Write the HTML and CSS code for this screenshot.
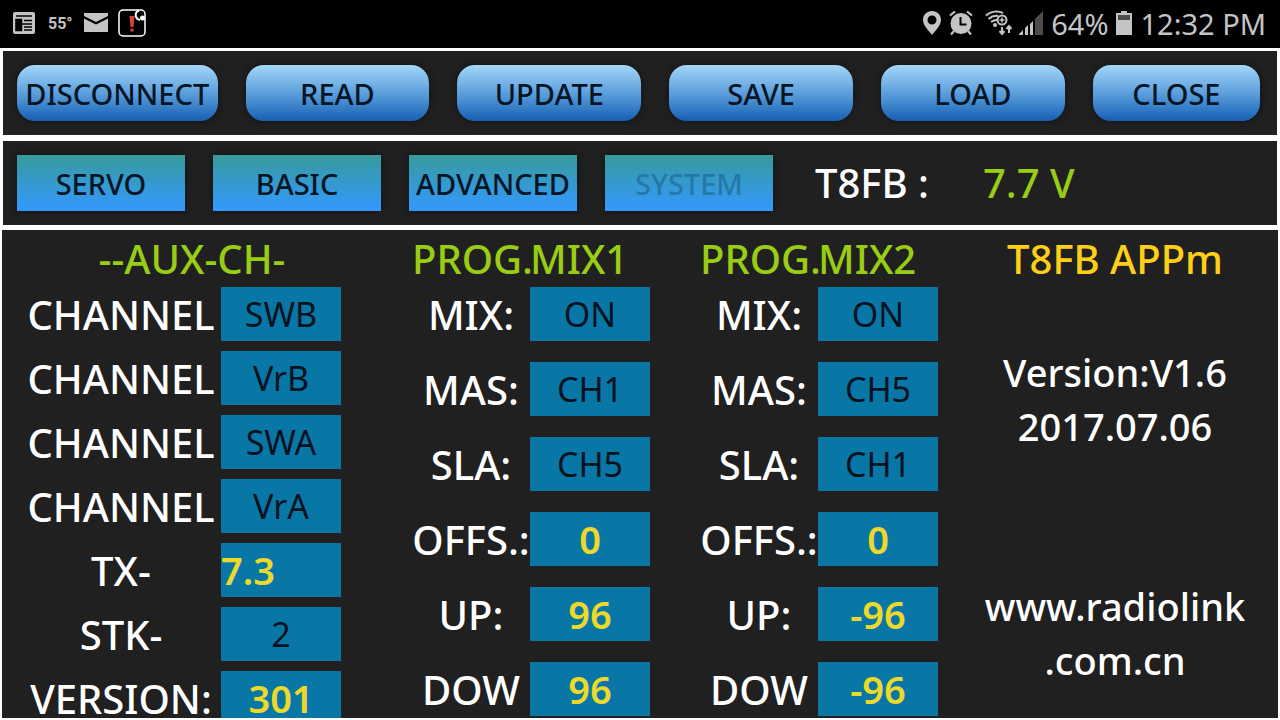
FILE: index.html
```html
<!DOCTYPE html>
<html lang="en">

<head>
    <meta charset="UTF-8">
    <meta name="viewport" content="width=device-width, initial-scale=1">
    <title>T8FB APPm</title>
    <link rel="stylesheet" href="styles.css">
</head>

<body>
    <header class="statusbar">
        <div class="status-left">
            <svg width="24" height="24" viewBox="0 0 24 24">
                <rect x="1" y="1" width="22" height="22" rx="2" fill="#c4c4c4"/>
                <path d="M4 5h16M4 8.500h5.500v11H4zM12 9.500h8M10 13h10M12 16h8M12 19h8" stroke="#000" stroke-width="1.600" fill="none"/>
                <path d="M4 8h5v11H4z" fill="#000"/>
            </svg>
            <span class="temp">55°</span>
            <svg width="24" height="20" viewBox="0 0 24 20">
                <path d="M0 0h24v3l-12 6L0 3z" fill="#c4c4c4"/>
                <path d="M0 5.500l12 6 12-6V19H0z" fill="#c4c4c4"/>
            </svg>
            <svg class="alert" width="28" height="28" viewBox="0 0 28 28">
                <rect x="1" y="1" width="26" height="26" rx="4" fill="#000" stroke="#fff" stroke-width="1.500"/>
                <path d="M11.500 7h5l-1 11h-3zM12.500 19.500h3v3h-3z" fill="#d8433c"/>
                <path d="M21 1.500c-5 2-4 8.500 1 9.500" stroke="#fff" stroke-width="2" fill="none"/>
                <circle cx="24.500" cy="9" r="2.500" fill="#fff"/>
            </svg>
        </div>
        <div class="status-right">
            <svg width="18" height="26" viewBox="0 0 18 26">
                <path fill-rule="evenodd" d="M9 1C4 1 0 4.800 0 9.800 0 15.500 5 20 9 25c4-5 9-9.500 9-15.200C18 4.800 14 1 9 1zm0 4.500a4.500 4.500 0 1 1 0 9 4.500 4.500 0 0 1 0-9z" fill="#c4c4c4"/>
            </svg>
            <svg width="24" height="26" viewBox="0 0 24 26">
                <circle cx="12" cy="13.500" r="10.500" fill="#c4c4c4"/>
                <path d="M1 5.500l5-4M23 5.500l-5-4M5 21l-3 3.500M19 21l3 3.500" stroke="#c4c4c4" stroke-width="2.200"/>
                <path d="M11.500 7v7.500h6" stroke="#000" stroke-width="2" fill="none"/>
            </svg>
            <svg class="wifi" width="28" height="26" viewBox="0 0 28 26">
                <g stroke="#c4c4c4" stroke-width="2" fill="none">
                    <path d="M1 5.500C6 1 13 .500 18 3M3.500 9C7 6 10 5.500 13 6M6 12c2-1.500 3.500-2 6-2"/>
                    <circle cx="17" cy="10" r="4.500"/>
                    <path d="M17 7.500v5M14.500 10h5" stroke-width="1.500"/>
                    <path d="M17 17v7M14.500 21l2.500 3 2.500-3M24 23v-7M21.500 19l2.500-3 2.500 3"/>
                </g>
                <circle cx="10" cy="15" r="2" fill="#c4c4c4"/>
            </svg>
            <svg width="24" height="24" viewBox="0 0 24 24">
                <path d="M0 24v-1l4-4v5zM6 24v-7l3-3v10zM11 24V13l3-3v14z" fill="#c4c4c4"/>
                <path d="M16 24V8l8-8v24z" fill="#4c4c4c"/>
            </svg>
            <span>64%</span>
            <svg width="16" height="24" viewBox="0 0 16 24">
                <path d="M5 0h6v2h5v22H0V2h5z" fill="#c4c4c4"/>
                <path d="M2 4h12v5H2z" fill="#4c4c4c"/>
            </svg>
            <span>12:32 PM</span>
        </div>
    </header>

    <div class="panel toolbar">
        <button type="button">DISCONNECT</button>
        <button type="button">READ</button>
        <button type="button">UPDATE</button>
        <button type="button">SAVE</button>
        <button type="button">LOAD</button>
        <button type="button">CLOSE</button>
    </div>

    <nav class="panel tabs">
        <button type="button">SERVO</button>
        <button type="button">BASIC</button>
        <button type="button">ADVANCED</button>
        <button type="button" disabled>SYSTEM</button>
        <span class="device">T8FB :</span>
        <span class="voltage">7.7 V</span>
    </nav>

    <main class="content">
        <section class="aux">
            <h2>--AUX-CH-</h2>
            <div class="fields">
                <label for="ch1">CHANNEL</label>
                <button type="button" id="ch1">SWB</button>
                <label for="ch2">CHANNEL</label>
                <button type="button" id="ch2">VrB</button>
                <label for="ch3">CHANNEL</label>
                <button type="button" id="ch3">SWA</button>
                <label for="ch4">CHANNEL</label>
                <button type="button" id="ch4">VrA</button>
                <label for="tx">TX-</label>
                <input class="left" type="text" id="tx" value="7.3">
                <label for="stk">STK-</label>
                <button type="button" id="stk">2</button>
                <label for="version">VERSION:</label>
                <input type="text" id="version" value="301">
            </div>
        </section>

        <section class="mix mix1">
            <h2><span>PROG.</span><span>MIX1</span></h2>
            <div class="fields">
                <label for="mix1">MIX:</label>
                <button type="button" id="mix1">ON</button>
                <label for="mas1">MAS:</label>
                <button type="button" id="mas1">CH1</button>
                <label for="sla1">SLA:</label>
                <button type="button" id="sla1">CH5</button>
                <label for="offs1">OFFS.:</label>
                <input type="text" id="offs1" value="0">
                <label for="up1">UP:</label>
                <input type="text" id="up1" value="96">
                <label for="down1">DOW</label>
                <input type="text" id="down1" value="96">
            </div>
        </section>

        <section class="mix mix2">
            <h2><span>PROG.</span><span>MIX2</span></h2>
            <div class="fields">
                <label for="mix2">MIX:</label>
                <button type="button" id="mix2">ON</button>
                <label for="mas2">MAS:</label>
                <button type="button" id="mas2">CH5</button>
                <label for="sla2">SLA:</label>
                <button type="button" id="sla2">CH1</button>
                <label for="offs2">OFFS.:</label>
                <input type="text" id="offs2" value="0">
                <label for="up2">UP:</label>
                <input type="text" id="up2" value="-96">
                <label for="down2">DOW</label>
                <input type="text" id="down2" value="-96">
            </div>
        </section>

        <section class="info">
            <h2>T8FB APPm</h2>
            <p class="release">Version:V1.6<br>2017.07.06</p>
            <p class="site">www.radiolink<br>.com.cn</p>
        </section>
    </main>
</body>

</html>
```
FILE: styles.css
```css
* {
    box-sizing: border-box;
}

body {
    margin: 0;
    height: 100vh;
    overflow: hidden;
    display: flex;
    flex-direction: column;
    background-color: #fff;
    color: #fff;
    font-family: "Noto Sans", "Open Sans", sans-serif;
    font-weight: 500;
}

button,
input {
    font-family: inherit;
    border: none;
    padding: 0;
}

/* phone status bar */
.statusbar {
    display: flex;
    justify-content: space-between;
    align-items: center;
    flex: none;
    height: 48px;
    padding: 0 14px 2px 12px;
    background-color: #000;
    color: #c4c4c4;
    font-size: 29px;
    font-weight: 400;
}

.status-left,
.status-right {
    display: flex;
    align-items: center;
}

.status-left {
    gap: 12px;
}

.status-right {
    gap: 8px;
}

.temp {
    width: 24px;
    font-family: Roboto, sans-serif;
    font-size: 16px;
    font-weight: 700;
    text-align: center;
}

.alert {
    margin-left: -2px;
}

.wifi {
    margin-left: 4px;
    margin-right: -2px;
}

/* button rows */
.panel {
    flex: none;
    margin: 3px 3px 0;
    padding: 14px;
    background-color: #202020;
}

.panel button {
    height: 56px;
    font-size: 29px;
    font-weight: 500;
    color: #041525;
}

.toolbar {
    display: grid;
    grid-template-columns: 12fr 11fr 11fr 11fr 11fr 10fr;
    gap: 28px;
    padding-right: 17px;
}

.toolbar button {
    border-radius: 18px;
    background: linear-gradient(#a4d6f8, #5c9fdc 50%, #1560b4);
    box-shadow: 0 0 6px #111;
}

.tabs {
    display: flex;
    align-items: center;
    gap: 28px;
    margin-top: 6px;
}

.tabs button {
    width: 168px;
    background: linear-gradient(#379a9c, #3399ff);
    box-shadow: 0 0 6px #111;
}

.tabs button:disabled {
    color: #2479a8;
}

.device,
.voltage {
    font-size: 40px;
    line-height: 56px;
    padding-left: 14px;
}

.voltage {
    padding-left: 26px;
    color: #99cc14;
}

/* settings */
.content {
    flex: 1;
    min-height: 0;
    overflow: hidden;
    display: grid;
    grid-template-columns: minmax(0, 339fr) minmax(0, 309fr) minmax(0, 288fr) minmax(0, 340fr);
    margin: 5px 2px 2px;
    background-color: #202020;
}

h2 {
    margin: 0;
    height: 57px;
    font-size: 40px;
    font-weight: 500;
    line-height: 57px;
    text-align: center;
    color: #99cc14;
}

.fields {
    display: grid;
    grid-template-columns: minmax(0, 1fr) 120px;
    row-gap: 10px;
}

.fields label {
    font-size: 40px;
    line-height: 56px;
    height: 54px;
    text-align: center;
    white-space: nowrap;
}

.fields button,
.fields input {
    width: 120px;
    height: 54px;
    border-radius: 0;
    background-color: #0977a6;
    text-align: center;
}

.fields button {
    font-size: 34px;
    font-weight: 400;
    color: #04121f;
}

.fields input {
    font-size: 38px;
    font-weight: 600;
    color: #ecd92a;
}

.fields .left {
    text-align: left;
}

.aux {
    padding-left: 19px;
}

.aux h2 {
    padding-left: 22px;
}

.mix h2 {
    display: grid;
    grid-template-columns: minmax(0, 1fr) 120px;
    text-align: left;
}

.mix .fields {
    row-gap: 21px;
}

.mix1 {
    padding-left: 71px;
}

.mix2 {
    padding-left: 50px;
}

.info {
    padding-left: 14px;
    text-align: center;
}

.info h2 {
    color: #fdd017;
}

.info p {
    margin: 0;
    font-size: 38px;
    line-height: 54px;
}

.info .release {
    padding-top: 58px;
}

.info .site {
    padding-top: 126px;
}
```
